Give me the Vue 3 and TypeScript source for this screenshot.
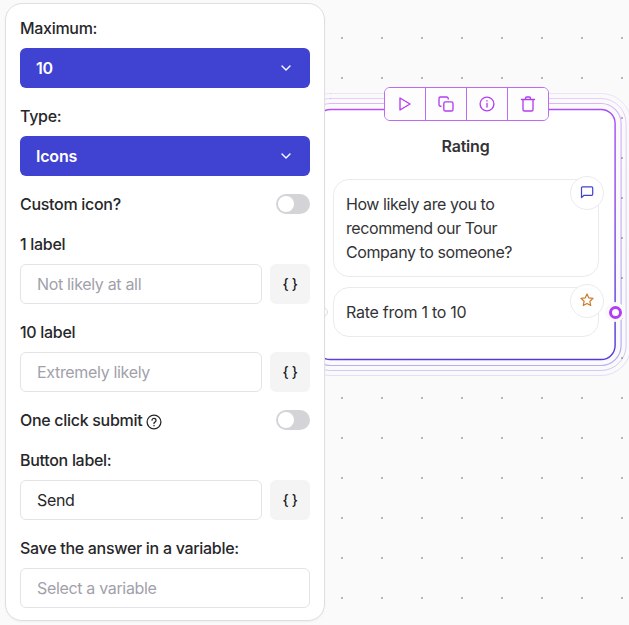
<script setup lang="ts">
import { ref } from 'vue'

interface Toggle { label: string; help?: boolean }

const maximum = ref('10')
const iconType = ref('Icons')
const buttonLabel = ref('Send')
const rings = [
  { inset: 0, width: 1.4, opacity: 1 },
  { inset: 6, width: 1.2, opacity: 0.4 },
  { inset: 11, width: 1, opacity: 0.25 },
  { inset: 16, width: 1, opacity: 0.14 },
]
const customIcon: Toggle = { label: 'Custom icon?' }
const oneClick: Toggle = { label: 'One click submit', help: true }
</script>

<template>
  <main class="editor">
    <section class="node">
      <svg class="rings" width="336" height="286" viewBox="-18 -18 336 286">
        <defs>
          <linearGradient id="edge" x1="120" y1="0" x2="180" y2="250" gradientUnits="userSpaceOnUse">
            <stop offset="0" stop-color="#b84dff" />
            <stop offset="0.5" stop-color="#8a48f0" />
            <stop offset="1" stop-color="#5238de" />
          </linearGradient>
        </defs>
        <rect
          v-for="r in rings" :key="r.inset"
          :x="0.5 - r.inset" :y="0.5 - r.inset"
          :width="298.6 + r.inset * 2" :height="250 + r.inset * 2"
          :rx="14 + r.inset" :fill="r.inset ? 'none' : '#fff'"
          stroke="url(#edge)" :stroke-width="r.width" :stroke-opacity="r.opacity"
        />
      </svg>
      <nav class="toolbar">
        <button><svg viewBox="0 0 16 16"><path d="M3 2l10 6-10 6z" /></svg></button>
        <button><svg viewBox="0 0 16 16"><rect x="5.8" y="5.8" width="9.2" height="9.2" rx="1.6" /><path d="M3 10.2h-.5A1.5 1.5 0 0 1 1 8.700V2.500A1.500 1.500 0 0 1 2.500 1h6.200a1.500 1.500 0 0 1 1.500 1.500V3" /></svg></button>
        <button><svg viewBox="0 0 16 16"><circle cx="8" cy="8" r="6.900" /><path d="M8 7.300v3.700M8 4.700v.4" /></svg></button>
        <button><svg viewBox="0 0 16 16"><path d="M1.500 3.500h13M3 3.500v10A1.500 1.500 0 0 0 4.500 15h7a1.500 1.500 0 0 0 1.500-1.500v-10M5.500 3.500V2.200A1.200 1.200 0 0 1 6.700 1h2.600a1.200 1.200 0 0 1 1.200 1.200v1.300" /></svg></button>
      </nav>
      <h2>Rating</h2>
      <div class="blocks">
        <article class="block question">
          How likely are you to recommend our Tour Company to someone?
          <span class="badge chat"><svg viewBox="0 0 14 14"><path d="M1.500 12.500V2.800A1 1 0 0 1 2.500 1.800h9.200a1 1 0 0 1 1 1v6.500a1 1 0 0 1-1 1H4z" /></svg></span>
        </article>
        <article class="block">
          Rate from 1 to 10
          <span class="badge star"><svg viewBox="0 0 14 14"><path d="M7 1l1.800 3.900 4.200.5-3.100 2.900.8 4.200L7 10.400l-3.700 2.100.8-4.200L1 5.400l4.200-.5z" /></svg></span>
        </article>
      </div>
      <span class="port"></span>
    </section>
    <span class="entry"></span>

    <aside class="panel">
      <div class="field">
        <label>Maximum:</label>
        <button class="select">{{ maximum }}<svg viewBox="0 0 12 12"><path d="M2 4l4 4 4-4" /></svg></button>
      </div>
      <div class="field">
        <label>Type:</label>
        <button class="select">{{ iconType }}<svg viewBox="0 0 12 12"><path d="M2 4l4 4 4-4" /></svg></button>
      </div>
      <div class="toggle-row"><label>{{ customIcon.label }}</label><span class="switch"></span></div>
      <div class="field">
        <label>1 label</label>
        <div class="input-row"><input placeholder="Not likely at all"><button class="braces">{ }</button></div>
      </div>
      <div class="field">
        <label>10 label</label>
        <div class="input-row"><input placeholder="Extremely likely"><button class="braces">{ }</button></div>
      </div>
      <div class="toggle-row">
        <label>{{ oneClick.label }}</label>
        <svg v-if="oneClick.help" class="help" viewBox="0 0 16 16"><circle cx="8" cy="8" r="6.900" /><path d="M6 6.200a2 2 0 1 1 2.900 1.900C8.200 8.500 8 8.800 8 9.400M8 11.300v.5" /></svg>
        <span class="switch"></span>
      </div>
      <div class="field">
        <label>Button label:</label>
        <div class="input-row"><input v-model="buttonLabel"><button class="braces">{ }</button></div>
      </div>
      <div class="field">
        <label>Save the answer in a variable:</label>
        <div class="input-row"><input placeholder="Select a variable"></div>
      </div>
    </aside>
  </main>
</template>

<style>
body { overflow: hidden; }
</style>

<style scoped>
*, *::before { box-sizing: border-box; }
.editor {
  position: relative;
  width: 629px;
  height: 625px;
  padding: 3px 5px;
  overflow: hidden;
  background: #fafafa radial-gradient(circle, #b8b8bc 0 1px, transparent 1.3px) 2px 18px / 40px 40px;
  font: 400 16px/24px Inter, "Liberation Sans", sans-serif;
  letter-spacing: -0.33px;
  color: #27272a;
}
label { font-weight: 450; letter-spacing: -0.3px; }
button, input { font: inherit; letter-spacing: inherit; border: 0; margin: 0; }
svg { display: block; fill: none; stroke: currentColor; stroke-linecap: round; stroke-linejoin: round; }
.panel {
  position: relative;
  width: 320px;
  height: 618px;
  padding: 12px 14px;
  display: flex;
  flex-direction: column;
  gap: 16px;
  background: #fff;
  border: 1px solid #dfdfe2;
  border-radius: 17px;
  box-shadow: 0 1px 2px #0000000d;
}
.field { display: flex; flex-direction: column; gap: 8px; }
.select {
  height: 40px;
  padding: 0 18px 0 16px;
  display: flex;
  align-items: center;
  justify-content: space-between;
  border-radius: 6px;
  background: #4042d2;
  color: #fff;
  font-weight: 600;
  letter-spacing: -0.2px;
}
.select svg { width: 12px; height: 12px; stroke-width: 1.4; }
.toggle-row { height: 24px; display: flex; align-items: center; }
.switch { width: 34px; height: 20px; margin-left: auto; padding: 2px; border-radius: 10px; background: #d4d4d8; }
.switch::before { content: ""; display: block; width: 16px; height: 16px; border-radius: 50%; background: #fff; }
.help { width: 16px; height: 16px; margin: 3px 0 0 4px; stroke-width: 1.3; }
.input-row { display: flex; gap: 8px; }
input {
  flex: 1;
  min-width: 0;
  height: 40px;
  padding: 0 16px;
  border: 1px solid #e4e4e7;
  border-radius: 6px;
  background: #fff;
  color: #27272a;
}
input::placeholder { color: #a1a1aa; opacity: 1; }
.braces { width: 40px; height: 40px; padding: 0; border-radius: 6px; background: #f4f4f5; color: #18181b; font-size: 14px; font-weight: 450; }
.node {
  position: absolute;
  left: 316px;
  top: 109px;
  width: 300px;
  height: 251px;
  padding: 25px 17px;
  color: #333336;
}
.rings { position: absolute; left: -18px; top: -18px; }
.toolbar {
  position: absolute;
  left: 68px;
  top: -22px;
  width: 165px;
  height: 34px;
  display: flex;
  border: 1px solid #bd6af5;
  border-radius: 6px;
  background: #fff;
  overflow: hidden;
  color: #b13df0;
}
.toolbar button { flex: 1; padding: 0; display: grid; place-items: center; background: #fdfdfd; color: inherit; }
.toolbar button + button { border-left: 1px solid #bd6af5; }
.toolbar svg { width: 16px; height: 16px; stroke-width: 1.35; }
h2 { position: relative; margin: 0 0 21px; padding-right: 1px; font-size: 16px; line-height: 24px; font-weight: 600; letter-spacing: -0.2px; text-align: center; }
.blocks { display: flex; flex-direction: column; gap: 10px; }
.block {
  position: relative;
  padding: 12px 50px 12px 12px;
  border: 1px solid #ebebed;
  border-radius: 16px;
  background: #fff;
  letter-spacing: -0.25px;
}
.question { letter-spacing: -0.42px; }
.badge {
  position: absolute;
  right: -6px;
  top: -4px;
  width: 34px;
  height: 34px;
  padding: 0 1px 3px 0;
  display: grid;
  place-items: center;
  border: 1px solid #ebebed;
  border-radius: 50%;
  background: #fff;
}
.badge svg { width: 14px; height: 14px; stroke-width: 1.2; }
.chat { color: #4042d2; }
.star { color: #cc7a29; }
.port {
  position: absolute;
  right: -9px;
  top: 193px;
  width: 20px;
  height: 20px;
  padding: 3.5px;
  border-radius: 50%;
  background: #fafafa;
}
.port::before { content: ""; display: block; width: 13px; height: 13px; border: 3px solid #b13df5; border-radius: 50%; background: #fff; }
.entry { position: absolute; left: 318px; top: 307px; width: 10px; height: 10px; border: 1px solid #dedee1; border-radius: 50%; background: #fff; }
</style>
